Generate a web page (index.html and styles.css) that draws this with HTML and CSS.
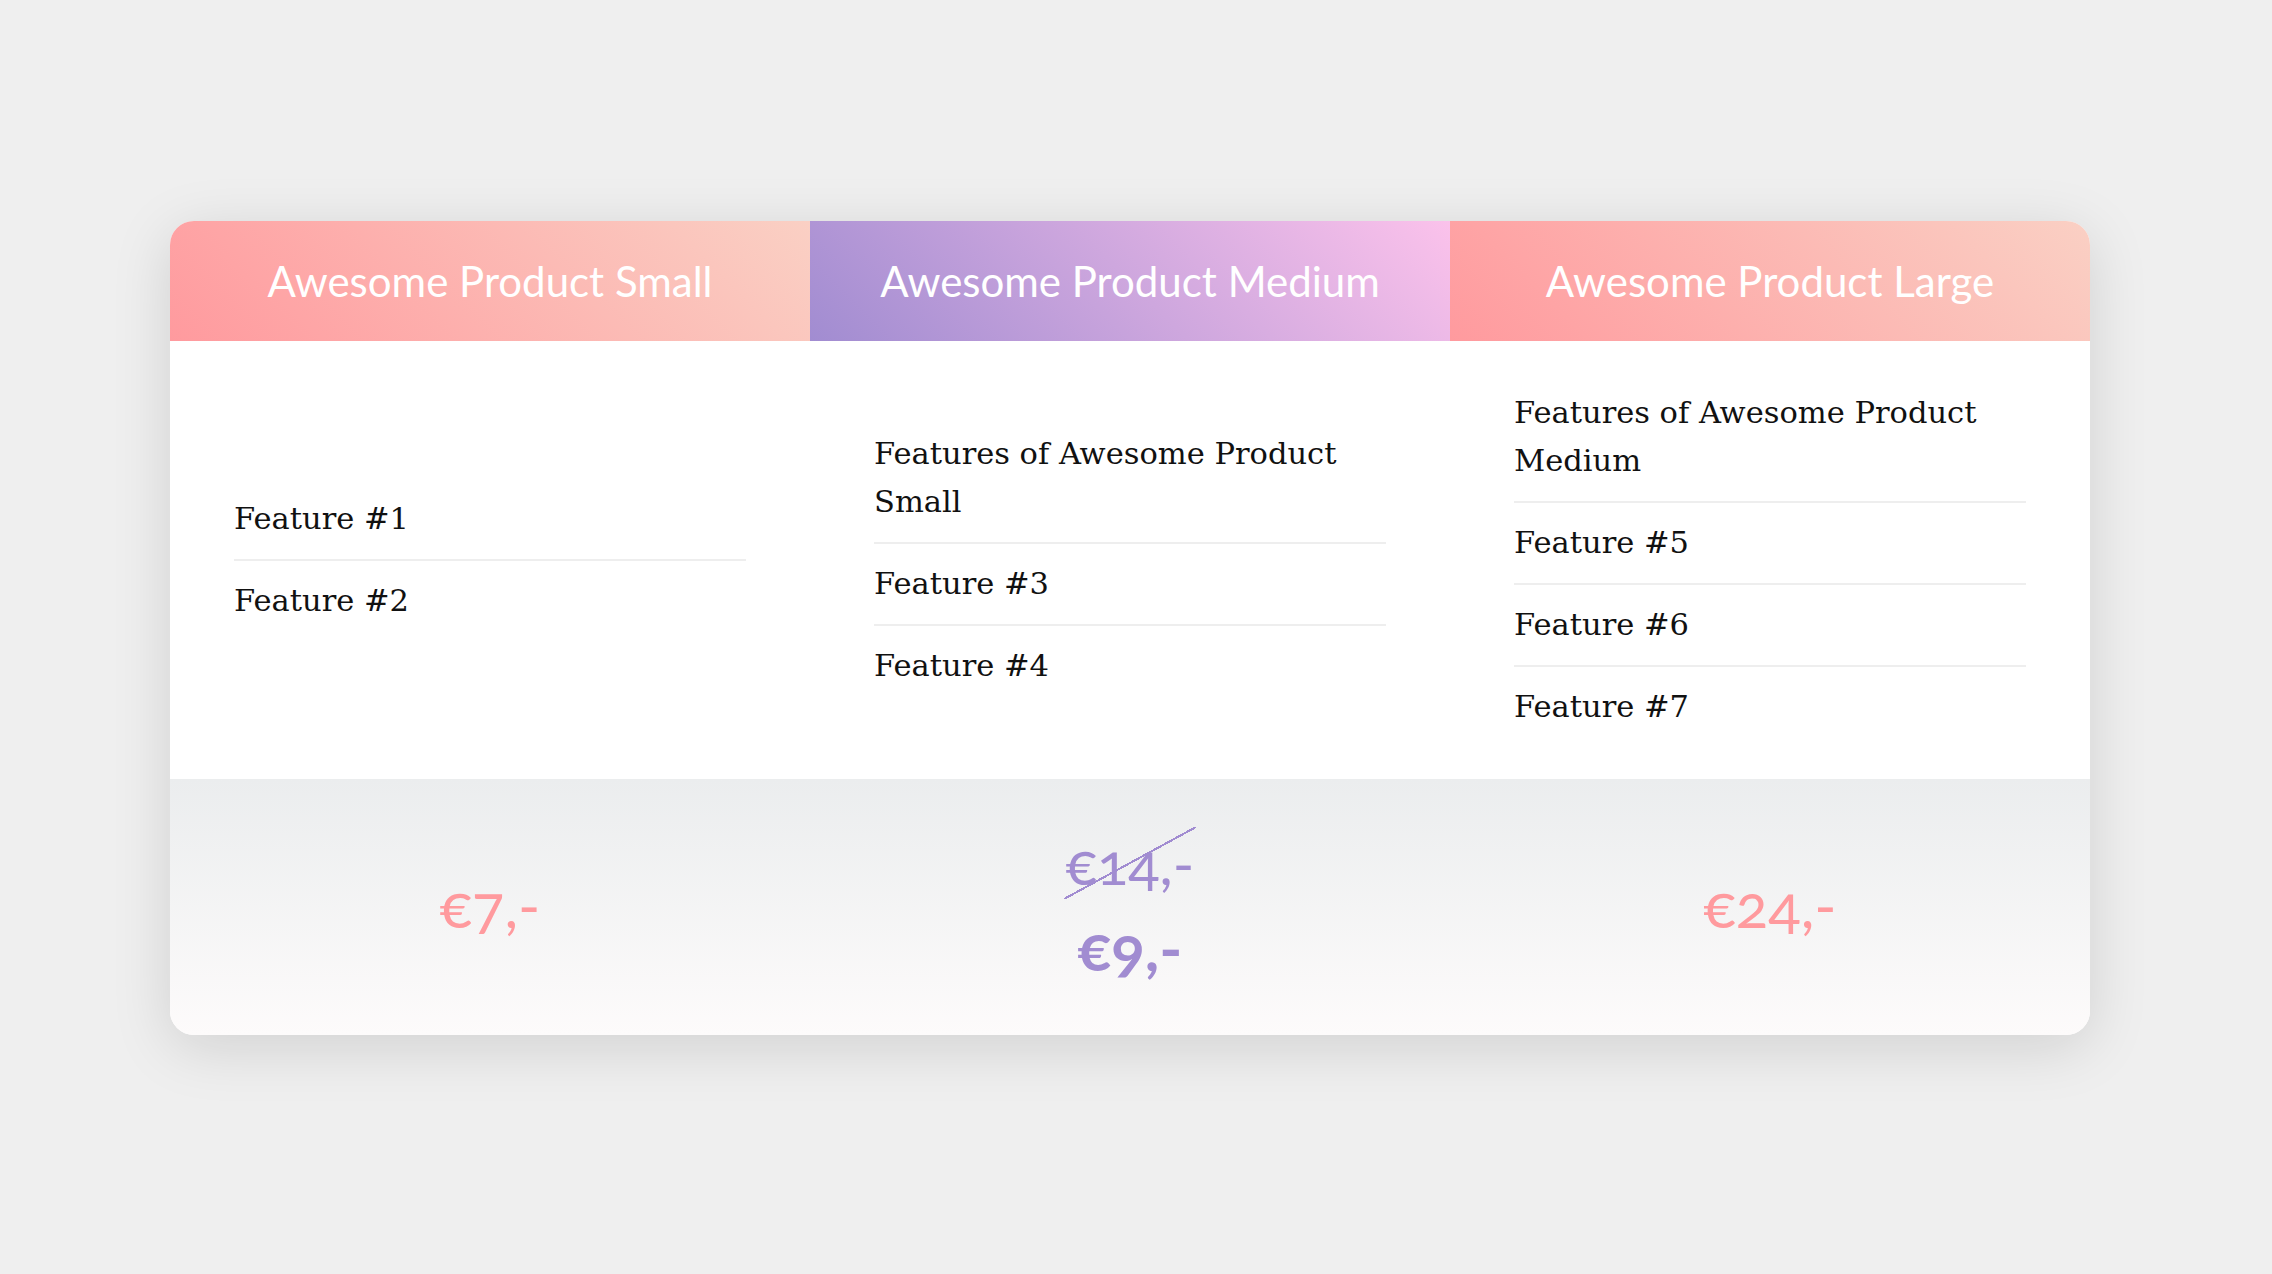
FILE: index.html
```html
<!DOCTYPE html>
<html lang="en">
<head>
<meta charset="utf-8">
<title>Pricing</title>
<link rel="stylesheet" href="styles.css">
</head>
<body>
<main class="page">
  <section class="pricing">
    <h2 class="head head-warm">Awesome Product Small</h2>
    <h2 class="head head-plum">Awesome Product Medium</h2>
    <h2 class="head head-warm">Awesome Product Large</h2>

    <div class="body">
      <ul class="features">
        <li>Feature #1</li>
        <li>Feature #2</li>
      </ul>
    </div>
    <div class="body">
      <ul class="features">
        <li>Features of Awesome Product Small</li>
        <li>Feature #3</li>
        <li>Feature #4</li>
      </ul>
    </div>
    <div class="body">
      <ul class="features">
        <li>Features of Awesome Product Medium</li>
        <li>Feature #5</li>
        <li>Feature #6</li>
        <li>Feature #7</li>
      </ul>
    </div>

    <div class="foot">
      <span class="price price-warm">€7,-</span>
    </div>
    <div class="foot">
      <span class="price price-plum price-old">€14,-</span>
      <span class="price price-plum price-new">€9,-</span>
    </div>
    <div class="foot">
      <span class="price price-warm">€24,-</span>
    </div>
  </section>
</main>
</body>
</html>
```
FILE: styles.css
```css
html, body {
  margin: 0;
  padding: 0;
  background: #efefef;
}

.page {
  padding: 221px 0 0 170px;
  min-height: 1274px;
  box-sizing: border-box;
}

.pricing {
  display: grid;
  grid-template-columns: repeat(3, 640px);
  width: 1920px;
  border-radius: 24px;
  overflow: hidden;
  background: #fff;
  box-shadow: 0 12px 60px rgba(0, 0, 0, 0.13);
}

.head {
  margin: 0;
  height: 120px;
  display: flex;
  align-items: center;
  justify-content: center;
  font-family: Lato, "Noto Sans", sans-serif;
  font-weight: 400;
  font-size: 42px;
  color: #fff;
}

.head-warm {
  background: linear-gradient(45deg, #ff9a9e 0%, #fad0c4 100%);
}

.head-plum {
  background: linear-gradient(45deg, #a18cd1 0%, #fbc2eb 100%);
}

.body {
  padding: 32px 64px;
  display: flex;
  align-items: center;
}

.features {
  list-style: none;
  margin: 0;
  padding: 0;
  width: 100%;
  font-family: "DejaVu Serif", serif;
  font-size: 30.5px;
  line-height: 48px;
  color: #111;
}

.features li {
  padding: 16px 0;
  border-bottom: 2px solid #eee;
}

.features li:last-child {
  border-bottom: none;
}

.foot {
  padding: 48px 0 52px;
  display: flex;
  flex-direction: column;
  align-items: center;
  justify-content: center;
  gap: 12px;
  background: linear-gradient(to bottom, #ebedee 0%, #fdfbfb 100%);
}

.price {
  font-family: Lato, "Noto Sans", sans-serif;
  font-size: 60px;
  line-height: 72px;
  font-variant-numeric: oldstyle-nums;
}

.price-warm {
  color: #ff9a9e;
}

.price-plum {
  color: #a18cd1;
}

.price-old {
  position: relative;
  padding: 0 2px;
  font-size: 58px;
}

.price-old::after {
  content: "";
  position: absolute;
  inset: 0;
  background: linear-gradient(to bottom right,
    transparent calc(50% - 1px),
    #a18cd1 calc(50% - 1px),
    #a18cd1 calc(50% + 1px),
    transparent calc(50% + 1px));
}

.price-new {
  font-weight: 700;
  font-size: 62px;
}
```
